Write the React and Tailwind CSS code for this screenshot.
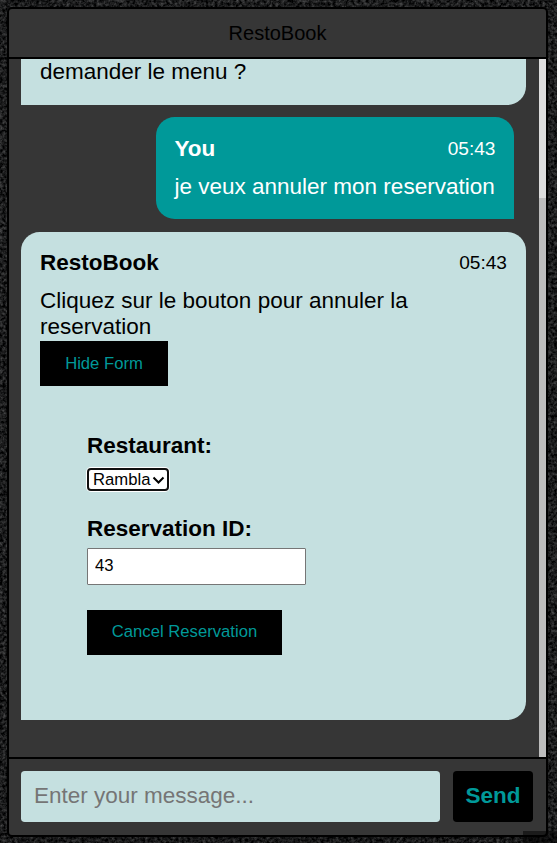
import React from "react";

function Texture() {
  return (
    <svg className="absolute inset-0 h-full w-full" aria-hidden="true">
      <filter id="asphalt" x="0" y="0" width="100%" height="100%" colorInterpolationFilters="sRGB">
        <feTurbulence type="fractalNoise" baseFrequency="0.33" numOctaves="4" seed="8" />
        <feColorMatrix
          type="matrix"
          values="0.45 0.1 0 0 -0.165  0.45 0.1 0 0 -0.163  0.45 0.1 0 0 -0.16  0 0 0 0 1"
        />
      </filter>
      <rect width="100%" height="100%" filter="url(#asphalt)" />
    </svg>
  );
}

function MessageInfo({ name, time }) {
  return (
    <div className="mb-3 flex h-[26px] items-center justify-between">
      <span className="font-bold">{name}</span>
      <span className="text-[19.125px]">{time}</span>
    </div>
  );
}

export default function App() {
  return (
    <div className="relative h-[843px] w-[557px] overflow-hidden bg-[#151515] pt-[7px] pl-[7px] font-['Liberation_Sans',Arial,sans-serif] text-black">
      <Texture />
      <section className="relative flex h-[830px] w-[541px] flex-col rounded-[5px] border-2 border-black bg-[#363636] shadow-[0_10px_10px_-5px_rgba(0,0,0,0.2)]">
        <header className="flex h-[50px] shrink-0 items-center justify-center border-b-2 border-black text-[20px]">
          RestoBook
        </header>

        <main className="flex h-[698px] shrink-0 overflow-hidden text-[22.5px] leading-[26px]">
          <div className="flex min-w-0 flex-1 flex-col pl-3">
            <div className="h-[46px] w-[505px] shrink-0 rounded-br-[18.75px] bg-[#c5e0e0] pl-[19px]">
              demander le menu ?
            </div>

            <div className="mt-3 mr-[25px] h-[102px] w-[358px] shrink-0 self-end rounded-[18.75px] rounded-br-none bg-[#009999] px-[18.5px] pt-[18.75px] text-white">
              <MessageInfo name="You" time="05:43" />
              <div className="whitespace-nowrap">je veux annuler mon reservation</div>
            </div>

            <div className="mt-[13px] h-[488px] w-[505px] shrink-0 rounded-[18.75px] rounded-bl-none bg-[#c5e0e0] px-[19px] pt-[18px]">
              <MessageInfo name="RestoBook" time="05:43" />
              <div className="h-[53px]">
                Cliquez sur le bouton pour annuler la
                <br />
                reservation
              </div>
              <button className="flex h-[45px] w-[128px] items-center justify-center bg-black text-[16.67px] text-[#009999]">
                Hide Form
              </button>
              <form className="flex flex-col items-start pt-[47px] pl-[47px]">
                <label className="font-bold">Restaurant:</label>
                <div className="mt-[9px] flex h-[23px] w-[82px] items-center justify-between rounded-[4px] border-2 border-[#101010] bg-white pr-[2px] pl-1 text-[16.67px] leading-[19px] shadow-[0_0_0_1px_white]">
                  Rambla
                  <svg width="13" height="10" viewBox="0 0 13 10" fill="none" stroke="black" strokeWidth="2">
                    <path d="M1.5 2.5 L6.5 7.5 L11.5 2.5" />
                  </svg>
                </div>
                <label className="mt-[25px] font-bold">Reservation ID:</label>
                <input
                  className="mt-[6px] h-[37px] w-[219px] rounded-[1px] border border-[#767676] bg-white px-[7px] pb-[2px] text-[16.67px] outline-none"
                  defaultValue="43"
                />
                <button
                  type="button"
                  className="mt-[25px] flex h-[45px] w-[195px] items-center justify-center bg-black pb-[2px] text-[16.67px] text-[#009999]"
                >
                  Cancel Reservation
                </button>
              </form>
            </div>
          </div>
          <div className="flex w-[7px] shrink-0 flex-col bg-[#dddddd] pt-[139px]">
            <div className="flex-1 bg-[#bdbdbd]" />
          </div>
        </main>

        <footer className="flex flex-1 gap-[13px] border-t-2 border-black px-3 pt-3 text-[22.5px]">
          <input
            className="h-[51px] w-[419px] rounded-[3.75px] bg-[#c5e0e0] px-[13px] pb-[2px] placeholder-[#757575] outline-none"
            placeholder="Enter your message..."
          />
          <button className="h-[51px] w-20 rounded-[3.75px] bg-black pb-px font-bold text-[#009999]">Send</button>
        </footer>
      </section>
      <div className="absolute right-0 bottom-0 h-3 w-[34px] bg-black/50" />
    </div>
  );
}
